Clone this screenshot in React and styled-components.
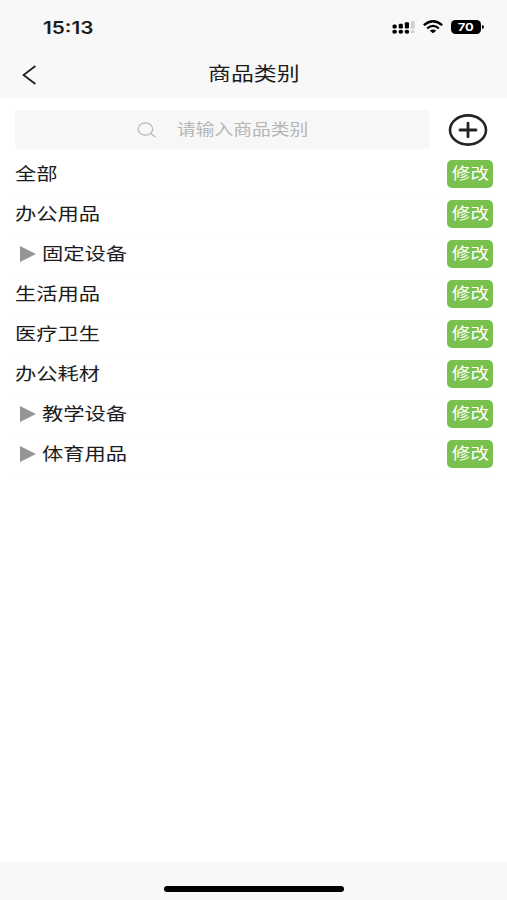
import React from 'react'
import styled, {createGlobalStyle} from 'styled-components'

const GlobalStyle = createGlobalStyle`
  * {
    box-sizing: border-box;
  }

  body {
    margin: 0;
    background: #fff;
    color: #1c1c1c;
    font-family: "Liberation Sans", "Noto Sans CJK SC", sans-serif;
  }
`

const Screen = styled.div`
  display: flex;
  flex-direction: column;
  height: 900px;
  width: 507px;
  overflow: hidden;
`

const Header = styled.header`
  height: 98px;
  background: #f8f8f8;
`

const StatusBar = styled.div`
  display: flex;
  align-items: center;
  justify-content: space-between;
  height: 55px;
  padding: 0 23px 0 43px;
`

// the typeface is drawn wide, so every label is stretched by the same ratio
const Wide = styled.span`
  display: inline-block;
  white-space: nowrap;
  transform: scaleX(1.21);
  transform-origin: ${props => props.$origin || 'left'} center;
`

const Time = styled(Wide)`
  font-family: Inter, sans-serif;
  font-size: 17.2px;
  font-weight: 600;
  line-height: 20px;
`

const StatusIcons = styled.div`
  display: flex;
  align-items: center;
  gap: 8px;
  padding-bottom: 1px;

  svg {
    display: block;
  }
`

const NavBar = styled.div`
  display: grid;
  grid-template-columns: 60px 1fr 60px;
  align-items: center;
  height: 40px;
`

const BackButton = styled.button`
  display: flex;
  border: 0;
  padding: 0 0 0 22px;
  background: none;
`

const Title = styled.h1`
  margin: 0;
  font-size: 18.9px;
  font-weight: 400;
  line-height: 28px;
  text-align: center;
`

const Main = styled.main`
  flex: 1;
  padding: 12px 14px 0 15px;
`

const SearchRow = styled.div`
  display: flex;
  align-items: center;
  justify-content: space-between;
  height: 39px;
  padding-right: 5px;
`

const SearchBox = styled.div`
  display: flex;
  align-items: center;
  gap: 20px;
  width: 415px;
  height: 39px;
  padding-left: 122px;
  border-radius: 4px;
  background: #f7f7f7;
  color: #b5b5b5;
  font-size: 15.5px;
  line-height: 24px;
`

const AddButton = styled.button`
  display: flex;
  border: 0;
  padding: 0;
  background: none;
`

const List = styled.ul`
  margin: 6px 0 0;
  padding: 0;
  list-style: none;
`

const Row = styled.li`
  display: flex;
  align-items: center;
  justify-content: space-between;
  height: 39.9px;
  border-bottom: 1px solid #fbfbfb;
`

const Name = styled.div`
  display: flex;
  align-items: center;
  gap: 6px;
  padding-left: ${props => (props.$nested ? '5px' : '0')};
  font-size: 17.6px;
  line-height: 26px;
`

const Arrow = styled.span`
  border-style: solid;
  border-width: 8px 0 8px 16px;
  border-color: transparent transparent transparent #969696;
`

const EditButton = styled.button`
  display: flex;
  align-items: center;
  justify-content: center;
  width: 46px;
  height: 28px;
  border: 0;
  border-radius: 5px;
  padding: 0 0 0 1px;
  background: #79c14e;
  color: #fff;
  font-family: inherit;
  font-size: 15.4px;
  line-height: 24px;
`

const Footer = styled.footer`
  display: flex;
  justify-content: center;
  height: 38px;
  padding: 24px 0 0 1px;
  background: #f8f8f8;
`

const HomeIndicator = styled.div`
  width: 180px;
  height: 6px;
  border-radius: 3px;
  background: #000;
`

const categories = [
    {name: '全部'},
    {name: '办公用品'},
    {name: '固定设备', nested: true},
    {name: '生活用品'},
    {name: '医疗卫生'},
    {name: '办公耗材'},
    {name: '教学设备', nested: true},
    {name: '体育用品', nested: true},
]

const SignalIcon = () => (
    <svg width="23" height="14" viewBox="0 0 23 14">
        <rect x="0.5" y="4.6" width="4.2" height="4" rx="1.5"/>
        <rect x="6.7" y="3.8" width="4.2" height="4.8" rx="1.3"/>
        <rect x="12.8" y="2.2" width="4.2" height="6.4" rx="1"/>
        <rect x="18.8" y="1" width="3.8" height="7.8" rx="1" fill="#cfcfcf"/>
        <ellipse cx="2.6" cy="11.8" rx="2.3" ry="2"/>
        <ellipse cx="8.8" cy="11.8" rx="2.3" ry="2"/>
        <ellipse cx="14.9" cy="11.8" rx="2.3" ry="2"/>
        <ellipse cx="20.7" cy="11.8" rx="1.9" ry="1.8" fill="#cfcfcf"/>
    </svg>
)

const WifiIcon = () => (
    <svg width="20" height="14" viewBox="0 0 20 14" fill="none" stroke="#000" strokeWidth="2.3">
        <path d="M.8 5.2Q10-2.8 19.2 5.2"/>
        <path d="M4.2 8.3Q10 3.4 15.8 8.3"/>
        <path d="M6.8 10.7Q10 8.2 13.2 10.7L10 13.3Z" fill="#000" stroke="none"/>
    </svg>
)

const BatteryIcon = () => (
    <svg width="33" height="14" viewBox="0 0 33 14">
        <rect width="30" height="14" rx="4.5"/>
        <path d="M31 5Q33 5.3 33 7T31 9Z"/>
        <text
            x="14.8"
            y="11"
            fill="#fff"
            fontFamily="Inter, sans-serif"
            fontSize="11"
            fontWeight="700"
            textAnchor="middle"
            textLength="16"
            lengthAdjust="spacingAndGlyphs"
        >70</text>
    </svg>
)

const BackIcon = () => (
    <svg width="15" height="20" viewBox="0 0 15 20" fill="none" stroke="#1c1c1c" strokeWidth="1.7">
        <path d="M13.4 1L1.5 10L13.4 19"/>
    </svg>
)

const SearchIcon = () => (
    <svg width="20" height="16" viewBox="0 0 20 16" fill="none" stroke="#b5b5b5" strokeWidth="1.2">
        <ellipse cx="8.4" cy="7" rx="7.3" ry="6.2"/>
        <path d="M13.6 11.3L18.6 15.3"/>
    </svg>
)

const AddIcon = () => (
    <svg width="40" height="32" viewBox="0 0 40 32" fill="none" stroke="#242424" strokeWidth="2.6">
        <ellipse cx="20" cy="16" rx="18" ry="14.6"/>
        <path d="M12 16H28M20 9.2V22.8" strokeWidth="2.8" strokeLinecap="round"/>
    </svg>
)

export default class App extends React.Component {
    render() {
        return (
            <Screen>
                <GlobalStyle/>
                <Header>
                    <StatusBar>
                        <Time>15:13</Time>
                        <StatusIcons>
                            <SignalIcon/>
                            <WifiIcon/>
                            <BatteryIcon/>
                        </StatusIcons>
                    </StatusBar>
                    <NavBar>
                        <BackButton aria-label="返回"><BackIcon/></BackButton>
                        <Title><Wide $origin="center">商品类别</Wide></Title>
                    </NavBar>
                </Header>
                <Main>
                    <SearchRow>
                        <SearchBox>
                            <SearchIcon/>
                            <Wide>请输入商品类别</Wide>
                        </SearchBox>
                        <AddButton aria-label="添加"><AddIcon/></AddButton>
                    </SearchRow>
                    <List>
                        {categories.map(({name, nested}) => (
                            <Row key={name}>
                                <Name $nested={nested}>
                                    {nested && <Arrow/>}
                                    <Wide>{name}</Wide>
                                </Name>
                                <EditButton><Wide $origin="center">修改</Wide></EditButton>
                            </Row>
                        ))}
                    </List>
                </Main>
                <Footer>
                    <HomeIndicator/>
                </Footer>
            </Screen>
        )
    }
}
